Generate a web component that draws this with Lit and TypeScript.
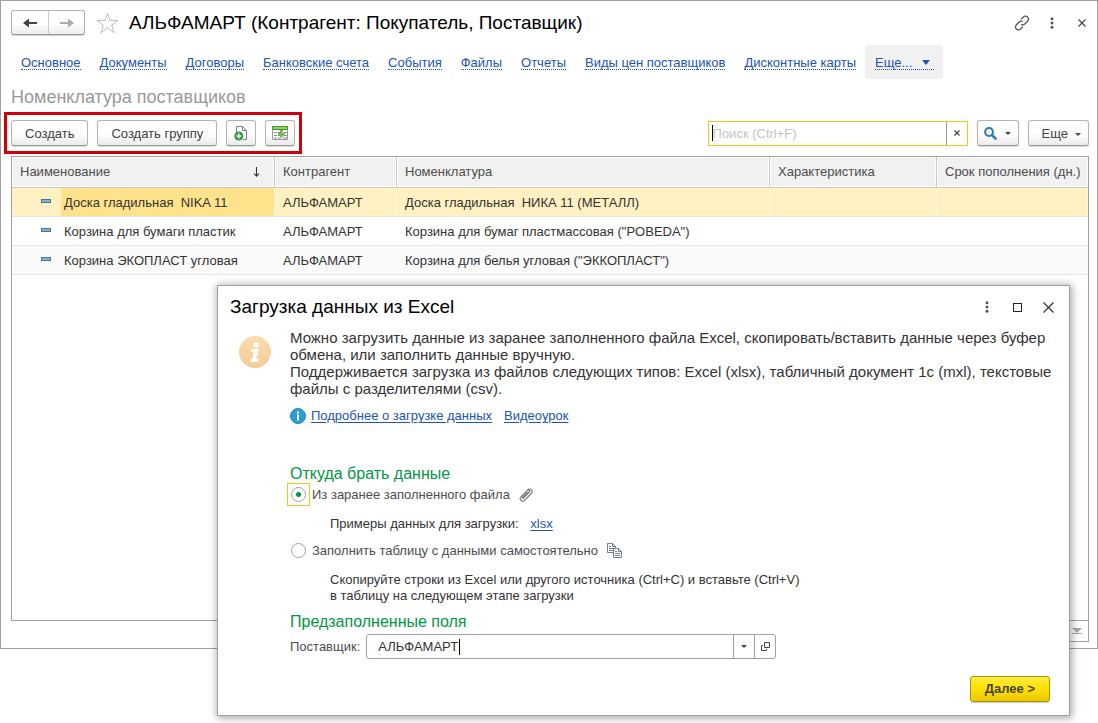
import { LitElement, html, css, svg } from "lit";
import { customElement, state } from "lit/decorators.js";
import { classMap } from "lit/directives/class-map.js";

interface Row {
  name: string;
  partner: string;
  item: string;
}

const LINKS = [
  "Основное",
  "Документы",
  "Договоры",
  "Банковские счета",
  "События",
  "Файлы",
  "Отчеты",
  "Виды цен поставщиков",
  "Дисконтные карты",
];

const ROWS: Row[] = [
  { name: "Доска гладильная  NIKA 11", partner: "АЛЬФАМАРТ", item: "Доска гладильная  НИКА 11 (МЕТАЛЛ)" },
  { name: "Корзина для бумаги пластик", partner: "АЛЬФАМАРТ", item: 'Корзина для бумаг пластмассовая ("POBEDA")' },
  { name: "Корзина ЭКОПЛАСТ угловая", partner: "АЛЬФАМАРТ", item: 'Корзина для белья угловая ("ЭККОПЛАСТ")' },
];

const dots = svg`<svg width="4" height="12" viewBox="0 0 4 12" fill="#555"><circle cx="2" cy="1.8" r="1.5"/><circle cx="2" cy="6" r="1.5"/><circle cx="2" cy="10.2" r="1.5"/></svg>`;
const caretDown = svg`<svg width="6" height="3" viewBox="0 0 6 3"><path d="M0 0h6L3 3z" fill="#444"/></svg>`;

const shared = css`
  * {
    box-sizing: border-box;
  }
  button,
  input {
    font: inherit;
    color: inherit;
    margin: 0;
    padding: 0;
    border: 0;
    background: none;
    outline: none;
  }
  svg {
    display: block;
    flex: none;
  }
  .icon-btn {
    display: flex;
    align-items: center;
    justify-content: center;
    width: 32px;
    height: 24px;
  }
  .caret {
    position: absolute;
    width: 1px;
    height: 16px;
    background: #000;
  }
`;

@customElement("supplier-items")
export class SupplierItems extends LitElement {
  @state() private selected = 0;

  static styles = [
    shared,
    css`
      :host {
        display: block;
        border: 1px solid #a0a0a0;
        background: #fff;
        padding: 9px 8px 6px 10px;
      }
      .header {
        display: flex;
        align-items: center;
        height: 25px;
      }
      .history {
        display: flex;
        border: 1px solid #b0b0b0;
        border-bottom-color: #989898;
        border-radius: 3px;
        background: linear-gradient(#fff 50%, #ededed);
        box-shadow: 0 1px 1px #d0d0d0;
      }
      .history button {
        display: flex;
        align-items: center;
        justify-content: center;
        width: 36px;
        height: 23px;
      }
      .history button + button {
        border-left: 1px solid #ccc;
      }
      .star {
        margin-left: 11px;
      }
      h1 {
        flex: 1;
        margin: 0 0 0 10px;
        font-size: 19px;
        line-height: 24px;
        font-weight: normal;
        color: #000;
        white-space: nowrap;
      }
      .tools {
        display: flex;
        margin-right: -8px;
      }
      .tools .icon-btn {
        width: 30px;
      }
      nav {
        display: flex;
        align-items: center;
        height: 34px;
        margin-top: 10px;
      }
      nav a {
        display: flex;
        padding: 0 9px 0 10px;
        color: #2054b4;
        text-decoration: none;
        white-space: nowrap;
      }
      nav span {
        display: flex;
        align-items: center;
        padding-top: 2px;
        line-height: 13px;
        border-bottom: 1px dotted #2054b4;
      }
      nav .more {
        height: 34px;
        align-items: center;
        border-radius: 4px;
        background: #f1f1f1;
      }
      nav .more svg {
        margin-left: 10px;
        margin-right: 4px;
      }
      h2 {
        margin: 7px 0 0;
        font-size: 18px;
        line-height: 22px;
        font-weight: normal;
        color: #999;
      }
      .toolbar {
        display: flex;
        align-items: center;
        gap: 9px;
        margin-top: 11px;
      }
      .marked {
        display: flex;
        gap: 9px;
        padding: 1px 0;
        outline: 3px solid #d0000a;
        outline-offset: 4px;
        margin-right: auto;
      }
      .btn {
        display: flex;
        align-items: center;
        justify-content: center;
        height: 26px;
        padding: 2px 13px 0;
        border: 1px solid #b4b4b4;
        border-bottom-color: #999;
        border-radius: 3px;
        background: linear-gradient(#fff 50%, #ebebeb);
        box-shadow: 0 1px 1px #d8d8d8;
        color: #404040;
        white-space: nowrap;
      }
      .btn.icon {
        width: 30px;
        padding: 0;
      }
      .btn.find {
        width: 42px;
        padding: 0;
        gap: 8px;
      }
      .btn.menu {
        padding: 2px 7px 0 13px;
        gap: 7px;
      }
      .search {
        position: relative;
        display: flex;
        width: 260px;
        height: 25px;
        border: 1px solid #f5c518;
      }
      .search input {
        flex: 1;
        min-width: 0;
        padding: 2px 4px 0;
      }
      .search input::placeholder {
        color: #c4c4c4;
        opacity: 1;
      }
      .search button {
        display: flex;
        align-items: center;
        justify-content: center;
        width: 21px;
        border-left: 1px solid #999;
      }
      .search .caret {
        left: 3px;
        top: 3px;
      }
      .panel {
        min-height: 465px;
        margin-top: 9px;
        border: 1px solid #a0a0a0;
      }
      table {
        width: 100%;
        table-layout: fixed;
        border-collapse: separate;
        border-spacing: 0;
      }
      th,
      td {
        padding: 0 8px;
        text-align: left;
        font-weight: normal;
        white-space: nowrap;
        overflow: hidden;
      }
      th {
        height: 31px;
        border-bottom: 1px solid #c8c8c8;
        border-right: 1px solid #c8c8c8;
        background: #f1f1f1;
        box-shadow: inset 0 0 0 1px #fff;
        color: #4d4d4d;
      }
      th:last-child {
        border-right: 0;
      }
      td {
        height: 29px;
        padding-top: 2px;
        border-bottom: 1px solid #e6e6e6;
        color: #333;
      }
      .text {
        white-space: pre;
      }
      .c-name {
        width: 263px;
      }
      .c-partner {
        width: 122px;
      }
      .c-feature {
        width: 167px;
      }
      .c-term {
        width: 151px;
      }
      .sort {
        display: flex;
        align-items: center;
        justify-content: space-between;
        padding-right: 6px;
      }
      .name {
        display: flex;
        align-items: center;
        height: 28px;
      }
      td.first {
        padding: 0;
      }
      .name svg {
        margin: 0 10px 3px 29px;
      }
      .label {
        flex: 1;
        line-height: 26px;
        padding: 2px 0 0 3px;
      }
      tr:nth-child(3) td {
        background: #fafafa;
      }
      tr.on td {
        background: #fff1c2;
        border-right: 1px solid #fff8e0;
      }
      tr.on .label {
        background: #ffe38c;
      }
      .pager {
        display: flex;
        justify-content: flex-end;
        align-items: center;
        width: 84px;
        height: 21px;
        margin-left: auto;
        padding-right: 6px;
        border: 1px solid #a0a0a0;
        border-top: 0;
      }
    `,
  ];

  render() {
    return html`
      <div class="header">
        <div class="history">
          <button aria-label="Назад">
            <svg width="14" height="10" viewBox="0 0 14 10"><path d="M0 5L6 0.5V4h8v2H6v3.5z" fill="#444" /></svg>
          </button>
          <button aria-label="Вперед">
            <svg width="14" height="10" viewBox="0 0 14 10"><path d="M14 5L8 0.5V4H0v2h8v3.5z" fill="#aaa" /></svg>
          </button>
        </div>
        <button class="star" aria-label="В избранное">
          <svg width="23" height="22" viewBox="0 0 23 22">
            <path d="M11.5 1.2L14 8.4h8l-6.3 4.7 2.4 7.6-6.6-4.7-6.6 4.7 2.4-7.6L1 8.4h8z" fill="#fff" stroke="#b8bcc4" />
          </svg>
        </button>
        <h1>АЛЬФАМАРТ (Контрагент: Покупатель, Поставщик)</h1>
        <div class="tools">
          <button class="icon-btn" aria-label="Ссылка">
            <svg width="16" height="16" viewBox="0 0 16 16" fill="none" stroke="#555" stroke-width="1.3">
              <path d="M7 4.4L9.4 2a2.9 2.9 0 0 1 4.2 0a2.9 2.9 0 0 1 0 4.2L10.8 9a2.9 2.9 0 0 1-3.6.4" />
              <path d="M9 11.6L6.6 14a2.9 2.9 0 0 1-4.2 0a2.9 2.9 0 0 1 0-4.2L5.2 7a2.9 2.9 0 0 1 3.6-.4" />
            </svg>
          </button>
          <button class="icon-btn" aria-label="Меню">${dots}</button>
          <button class="icon-btn" aria-label="Закрыть">
            <svg width="8" height="8" viewBox="0 0 8 8"><path d="M.5.5l7 7M7.5.5l-7 7" stroke="#444" stroke-width="1.2" /></svg>
          </button>
        </div>
      </div>

      <nav>
        ${LINKS.map((l) => html`<a href="#"><span>${l}</span></a>`)}
        <a class="more" href="#">
          <span>Еще...<svg width="8" height="5" viewBox="0 0 8 5"><path d="M0 0h8L4 5z" fill="#2054b4" /></svg></span>
        </a>
      </nav>

      <h2>Номенклатура поставщиков</h2>

      <div class="toolbar">
        <div class="marked">
          <button class="btn">Создать</button>
          <button class="btn">Создать группу</button>
          <button class="btn icon" aria-label="Создать из файла">
            <svg width="14" height="16" viewBox="0 0 14 16">
              <path d="M2.5 7V1.5h6l4 4V14.5H9" fill="#fff" stroke="#6f8196" />
              <path d="M8.5 1.5v4h4" fill="none" stroke="#6f8196" />
              <circle cx="4.8" cy="11" r="4.5" fill="#2c9c3c" />
              <path d="M4.8 8.5v5M2.3 11h5" stroke="#fff" stroke-width="1.5" />
            </svg>
          </button>
          <button class="btn icon" aria-label="Загрузить из таблицы">
            <svg width="16" height="14" viewBox="0 0 16 14">
              <path d="M.5 4v9.5h15V4" fill="#fff" stroke="#999" />
              <path d="M2 6.5h3M6 6.5h3M12 6.5h3M2 9.5h3M6 9.5h2M12 9.5h3M2 12h3M6 12h3M11 12h4" stroke="#8a8a8a" />
              <path d="M.5.5h15v3H.5z" fill="#8fd672" stroke="#4a8a2e" />
              <path d="M8.5 4h2v3.5H13l-3.5 4L6 7.5h2.5z" fill="#6cc04a" stroke="#58a53a" stroke-width=".6" />
            </svg>
          </button>
        </div>
        <div class="search">
          <input type="text" placeholder="Поиск (Ctrl+F)" aria-label="Поиск" />
          <span class="caret"></span>
          <button aria-label="Очистить">
            <svg width="6" height="6" viewBox="0 0 6 6"><path d="M.5.5l5 5M5.5.5l-5 5" stroke="#444" stroke-width="1.2" /></svg>
          </button>
        </div>
        <button class="btn find" aria-label="Найти">
          <svg width="13" height="13" viewBox="0 0 13 13">
            <circle cx="5" cy="5" r="3.9" fill="none" stroke="#3078b0" stroke-width="2" />
            <path d="M8 8l3.6 3.6" stroke="#3078b0" stroke-width="2.6" stroke-linecap="round" />
          </svg>
          ${caretDown}
        </button>
        <button class="btn menu">Еще ${caretDown}</button>
      </div>

      <div class="panel">
        <table>
          <colgroup>
            <col class="c-name" />
            <col class="c-partner" />
            <col />
            <col class="c-feature" />
            <col class="c-term" />
          </colgroup>
          <thead>
            <tr>
              <th>
                <div class="sort">
                  Наименование
                  <svg width="7" height="10" viewBox="0 0 7 10"><path d="M3.5 0v9M1 6.5l2.5 2.7L6 6.5" fill="none" stroke="#333" stroke-width="1.1" /></svg>
                </div>
              </th>
              <th>Контрагент</th>
              <th>Номенклатура</th>
              <th>Характеристика</th>
              <th>Срок пополнения (дн.)</th>
            </tr>
          </thead>
          <tbody>
            ${ROWS.map(
              (r, i) => html`<tr class=${classMap({ on: i === this.selected })} @click=${() => (this.selected = i)}>
                <td class="first">
                  <div class="name">
                    <svg width="10" height="4" viewBox="0 0 10 4"><rect x=".5" y=".5" width="9" height="3" fill="#7fb2dc" stroke="#4a7396" /></svg>
                    <span class="label text">${r.name}</span>
                  </div>
                </td>
                <td>${r.partner}</td>
                <td class="text">${r.item}</td>
                <td></td>
                <td></td>
              </tr>`
            )}
          </tbody>
        </table>
      </div>
      <div class="pager">
        <svg width="10" height="6" viewBox="0 0 10 6"><path d="M0 0h10L5 5zM0 5h10v1H0z" fill="#a8a8a8" /></svg>
      </div>
    `;
  }
}

@customElement("excel-import")
export class ExcelImport extends LitElement {
  @state() private source = "file";

  static styles = [
    shared,
    css`
      :host {
        display: block;
        border: 1px solid #a0a0a0;
        background: #fff;
        box-shadow: 1px 1px 8px 1px rgba(0, 0, 0, 0.35);
        padding: 9px 5px 12px 12px;
        color: #333;
      }
      .bar {
        display: flex;
        align-items: center;
        height: 24px;
      }
      h1 {
        flex: 1;
        margin: 0;
        font-size: 19px;
        line-height: 24px;
        font-weight: normal;
        color: #000;
      }
      .bar .icon-btn {
        width: 31px;
      }
      .content {
        display: flex;
        gap: 19px;
        margin-top: 10px;
      }
      .big {
        margin: 7px 0 0 9px;
      }
      .main {
        flex: 1;
        min-width: 0;
      }
      p {
        margin: 0;
      }
      .intro {
        font-size: 15px;
        line-height: 17px;
      }
      .links {
        display: flex;
        align-items: center;
        gap: 12px;
        margin: 10px 0 40px;
        line-height: 17px;
      }
      .links svg {
        margin-right: -7px;
      }
      a {
        color: #2054b4;
        text-underline-offset: 2px;
      }
      h2 {
        margin: 0;
        font-size: 16px;
        line-height: 19px;
        font-weight: normal;
        color: #009646;
      }
      .option {
        display: flex;
        align-items: center;
        height: 23px;
        margin-left: -3px;
        color: #4d4d4d;
      }
      .option label {
        padding: 0 9px 0 2px;
      }
      .box {
        display: flex;
        align-items: center;
        justify-content: center;
        width: 23px;
        height: 23px;
        border: 1px solid transparent;
      }
      .box.on {
        border-color: #f5c518;
      }
      input[type="radio"] {
        appearance: none;
        width: 15px;
        height: 15px;
        border: 1px solid #a0a0a0;
        border-radius: 50%;
      }
      input[type="radio"]:checked {
        background: radial-gradient(circle, #009646 2px, transparent 3px);
      }
      .hint {
        margin: 10px 0 0 40px;
        line-height: 16px;
      }
      .hint a {
        margin-left: 8px;
      }
      .hint + .option {
        margin-top: 7px;
      }
      .hint + h2 {
        margin-top: 8px;
      }
      .field {
        display: flex;
        align-items: center;
        gap: 6px;
        margin-top: 3px;
        color: #4d4d4d;
      }
      .combo {
        position: relative;
        display: flex;
        width: 410px;
        height: 25px;
        border: 1px solid #a0a0a0;
        border-radius: 3px;
        color: #333;
      }
      .combo input {
        flex: 1;
        min-width: 0;
        padding: 0 11px;
      }
      .combo button {
        display: flex;
        align-items: center;
        justify-content: center;
        width: 21px;
        border-left: 1px solid #a0a0a0;
      }
      .combo .caret {
        left: 92px;
        top: 4px;
      }
      .foot {
        display: flex;
        justify-content: flex-end;
        margin: 17px 14px 0 0;
      }
      .next {
        height: 26px;
        padding: 0 14px;
        border: 1px solid #a8940c;
        border-radius: 3px;
        background: linear-gradient(#ffec40, #ffe000 50%, #ecc800);
        box-shadow: 0 1px 1px #ccc;
        font-weight: bold;
        color: #444;
        margin-bottom: 1px;
      }
    `,
  ];

  private radio(value: string) {
    const on = this.source === value;
    return html`<span class=${classMap({ box: true, on })}
      ><input type="radio" name="source" id=${value} .checked=${on} @change=${() => (this.source = value)}
    /></span>`;
  }

  render() {
    return html`
      <div class="bar">
        <h1>Загрузка данных из Excel</h1>
        <button class="icon-btn" aria-label="Меню">${dots}</button>
        <button class="icon-btn" aria-label="Развернуть">
          <svg width="9" height="9" viewBox="0 0 9 9"><rect x=".5" y=".5" width="8" height="8" fill="none" stroke="#222" /></svg>
        </button>
        <button class="icon-btn" aria-label="Закрыть">
          <svg width="11" height="11" viewBox="0 0 11 11"><path d="M.5.5l10 10M10.5.5l-10 10" stroke="#333" stroke-width="1.2" /></svg>
        </button>
      </div>
      <div class="content">
        <svg class="big" width="32" height="32" viewBox="0 0 32 32">
          <defs>
            <linearGradient id="g" x2="0" y2="1"><stop stop-color="#fbdcae" /><stop offset="1" stop-color="#f3cd95" /></linearGradient>
          </defs>
          <circle cx="16" cy="16" r="16" fill="url(#g)" />
          <circle cx="17.3" cy="9" r="2.9" fill="#fff" />
          <path d="M12.5 13.5h6.8l-2.5 10h2.7l-.5 2h-7.5l.5-2h1.5l1.7-8h-3.2z" fill="#fff" stroke="#fff" stroke-width=".8" stroke-linejoin="round" />
        </svg>
        <div class="main">
          <p class="intro">Можно загрузить данные из заранее заполненного файла Excel, скопировать/вставить данные через буфер обмена, или заполнить данные вручную.</p>
          <p class="intro">Поддерживается загрузка из файлов следующих типов: Excel (xlsx), табличный документ 1с (mxl), текстовые файлы с разделителями (csv).</p>
          <div class="links">
            <svg width="16" height="16" viewBox="0 0 16 16">
              <circle cx="8" cy="8" r="7.5" fill="#2a9fd0" stroke="#2485b0" />
              <path d="M7 3.5h2v2H7zM7 6.5h2v6H7z" fill="#fff" />
            </svg>
            <a href="#">Подробнее о загрузке данных</a>
            <a href="#">Видеоурок</a>
          </div>

          <h2>Откуда брать данные</h2>
          <div class="option">
            ${this.radio("file")}<label for="file">Из заранее заполненного файла</label>
            <svg width="14" height="14" viewBox="0 0 14 14" fill="none" stroke="#777" stroke-width="1.2">
              <path d="M4 10.5L10.2 4a1.2 1.2 0 0 0-1.8-1.7L2 8.8a2.5 2.5 0 0 0 3.6 3.6L12 5.8A3 3 0 0 0 12.3 1.7" />
              <path d="M4 10.5a1 1 0 0 1-.2-1.5L8.5 4.2M12.3 1.7a2.5 2.5 0 0 0-3.9.6" />
            </svg>
          </div>
          <p class="hint">Примеры данных для загрузки: <a href="#">xlsx</a></p>
          <div class="option">
            ${this.radio("manual")}<label for="manual">Заполнить таблицу с данными самостоятельно</label>
            <svg width="15" height="15" viewBox="0 0 15 15" fill="#fff" stroke="#6f8196">
              <path d="M.5.5h5l3 3v6h-8zM5.5.5v3h3M2 3.5h2M2 5.5h4M2 7.5h4" />
              <path d="M6.5 5.5h5l3 3v6h-8zM11.5 5.5v3h3M8 8.5h2M8 10.5h5M8 12.5h5" />
            </svg>
          </div>
          <p class="hint">Скопируйте строки из Excel или другого источника (Ctrl+C) и вставьте (Ctrl+V)<br />в таблицу на следующем этапе загрузки</p>

          <h2>Предзаполненные поля</h2>
          <div class="field">
            <label for="supplier">Поставщик:</label>
            <div class="combo">
              <input id="supplier" type="text" value="АЛЬФАМАРТ" />
              <span class="caret"></span>
              <button aria-label="Выбрать">${caretDown}</button>
              <button aria-label="Открыть">
                <svg width="9" height="9" viewBox="0 0 9 9" fill="none" stroke="#444"><path d="M3.5.5h5v5h-5zM2 3.5H.5v5h5V7" /></svg>
              </button>
            </div>
          </div>
        </div>
      </div>
      <div class="foot"><button class="next">Далее &gt;</button></div>
    `;
  }
}

@customElement("app-root")
export class AppRoot extends LitElement {
  static styles = css`
    :host {
      display: block;
      position: relative;
      min-height: 100vh;
      background: #fff;
      font-family: "Liberation Sans", Arial, sans-serif;
      font-size: 13px;
      line-height: 16px;
    }
    .dialog {
      position: absolute;
      top: 285px;
      left: 217px;
      right: 28px;
    }
  `;

  render() {
    return html`<supplier-items></supplier-items><excel-import class="dialog"></excel-import>`;
  }
}
